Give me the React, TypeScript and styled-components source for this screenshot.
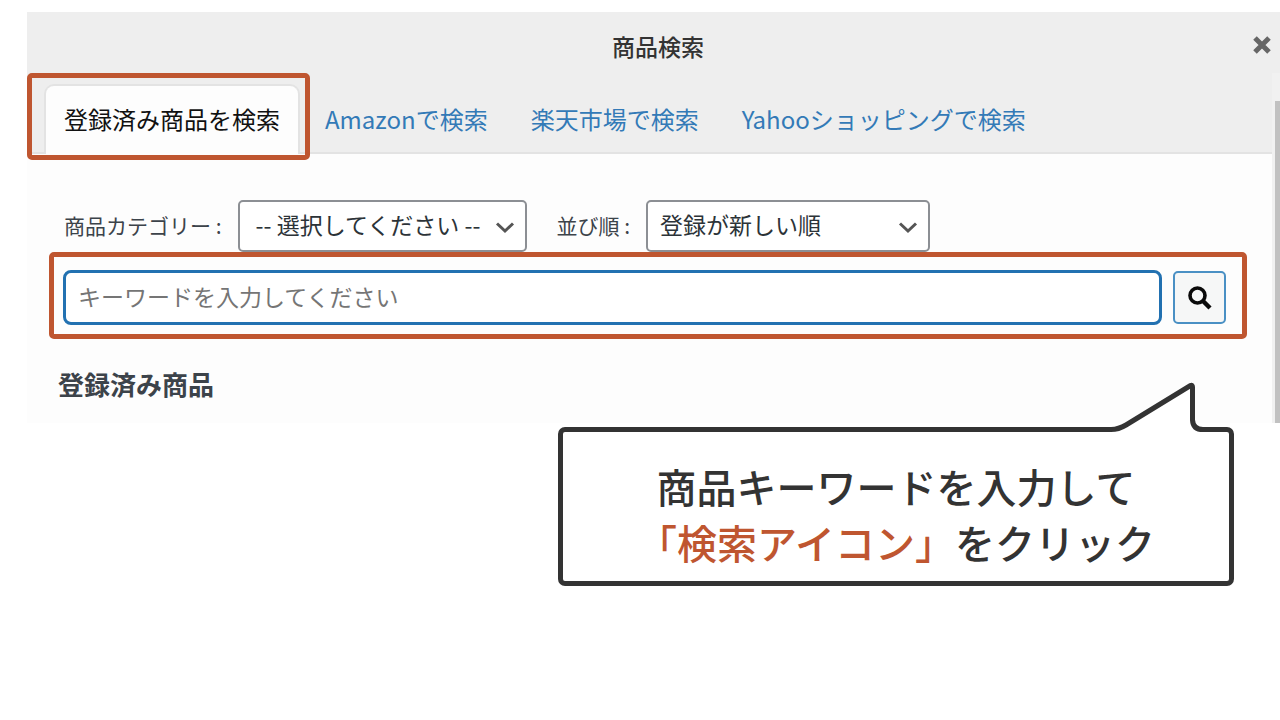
import React from "react";
import styled, { createGlobalStyle } from "styled-components";

const ACCENT = "#bf5630";
const INK = "#333333";
const BLUE = "#2271b1";

const GlobalStyle = createGlobalStyle`
  *, *::before, *::after { box-sizing: border-box; }
  body {
    margin: 0;
    background: #ffffff;
    font-family: "Noto Sans CJK JP", "Noto Sans", sans-serif;
    color: #3c434a;
  }
  button, input, select { font: inherit; color: inherit; margin: 0; }
`;

const Page = styled.main`
  display: flex;
  flex-direction: column;
  padding-top: 12px;
  overflow-x: hidden;
`;

const Dialog = styled.section`
  margin-left: 27px;
  background: #fdfdfd;
`;

const DialogHeader = styled.header`
  display: flex;
  align-items: center;
  height: 61px;
  padding: 6px 9px 0 36px;
  background: #eeeeee;
`;

const DialogTitle = styled.h1`
  flex: 1;
  margin: 0;
  font-size: 23px;
  line-height: 32px;
  font-weight: 500;
  text-align: center;
  color: #333333;
`;

const CloseButton = styled.button`
  display: flex;
  padding: 0 0 2px;
  border: 0;
  background: none;
`;

const DialogBody = styled.div`
  display: flex;
`;

const Content = styled.div`
  flex: 1;
  min-width: 0;
`;

const ScrollTrack = styled.div`
  width: 8px;
  padding: 28px 0 0 3px;
  background: #f1f1f1;
`;

const ScrollThumb = styled.div`
  height: 100%;
  background: #c1c1c1;
`;

const Tabs = styled.nav`
  display: flex;
  align-items: flex-end;
  gap: 5px;
  height: 81px;
  padding-left: 17px;
  border-bottom: 2px solid #e3e3e3;
  background: #eeeeee;
`;

const Tab = styled.a<{ $active?: boolean }>`
  position: relative;
  height: 70px;
  margin-bottom: -2px;
  padding: 0 ${(p) => (p.$active ? 18 : 16)}px 0 18px;
  border: 2px solid ${(p) => (p.$active ? "#e3e3e3" : "transparent")};
  border-bottom: 0;
  border-radius: 10px 10px 0 0;
  background: ${(p) => (p.$active ? "#fdfdfd" : "transparent")};
  color: ${(p) => (p.$active ? "#111111" : "#337ab7")};
  font-size: 24px;
  line-height: 66px;
  text-decoration: none;
  white-space: nowrap;
`;

const TabHighlight = styled.span`
  position: absolute;
  inset: -13px -12px -6px -19px;
  border: 5px solid ${ACCENT};
  border-radius: 5px;
  pointer-events: none;
`;

const Filters = styled.div`
  display: flex;
  align-items: center;
  gap: 30px;
  padding: 46px 0 0 37px;
`;

const Field = styled.div`
  display: flex;
  align-items: center;
  gap: 16px;
`;

const FieldLabel = styled.label`
  padding-bottom: 2px;
  font-size: 21px;
  white-space: nowrap;
`;

const SelectBox = styled.div<{ $width: number }>`
  position: relative;
  width: ${(p) => p.$width}px;
`;

const Select = styled.select<{ $indent: number }>`
  appearance: none;
  display: block;
  width: 100%;
  height: 52px;
  padding: 0 36px 4px ${(p) => p.$indent}px;
  border: 2px solid #8c8f94;
  border-radius: 5px;
  background: #ffffff;
  color: #2c3338;
  font-size: 23px;
`;

const Chevron = styled.svg`
  position: absolute;
  right: 12px;
  top: 21px;
  pointer-events: none;
`;

const SearchForm = styled.form`
  display: flex;
  align-items: center;
  gap: 11px;
  margin: 0 25px 0 22px;
  padding: 13px 16px 9px 9px;
  border: 5px solid ${ACCENT};
  border-radius: 5px;
`;

const KeywordInput = styled.input`
  flex: 1;
  min-width: 0;
  height: 55px;
  padding: 0 12px 4px;
  border: 3px solid ${BLUE};
  border-radius: 8px;
  outline: 0;
  background: #ffffff;
  font-size: 23px;
  &::placeholder { color: #757575; opacity: 1; }
`;

const SearchButton = styled.button`
  display: flex;
  align-items: center;
  justify-content: center;
  width: 53px;
  height: 53px;
  padding: 0;
  border: 2px solid #4a90c4;
  border-radius: 5px;
  background: #f6f7f7;
`;

const SectionTitle = styled.h2`
  margin: 0;
  padding: 26px 0 20px 31px;
  font-size: 26px;
  line-height: 38px;
  font-weight: 700;
`;

const Callout = styled.aside`
  position: relative;
  align-self: flex-end;
  margin: 4px 46px 0 0;
  padding: 26px 74px 11px;
  border: 5px solid ${INK};
  border-radius: 7px;
  background: #ffffff;
`;

const CalloutTail = styled.svg`
  position: absolute;
  right: 16px;
  top: -51px;
`;

const CalloutText = styled.p`
  margin: 0;
  font-size: 40px;
  line-height: 56px;
  font-weight: 500;
  text-align: center;
  white-space: nowrap;
  color: ${INK};
`;

const Accent = styled.strong`
  font-weight: inherit;
  color: ${ACCENT};
`;

type SelectFieldProps = {
  id: string;
  label: string;
  option: string;
  width: number;
  indent: number;
};

function SelectField({ id, label, option, width, indent }: SelectFieldProps) {
  return (
    <Field>
      <FieldLabel htmlFor={id}>{label}</FieldLabel>
      <SelectBox $width={width}>
        <Select id={id} $indent={indent}>
          <option>{option}</option>
        </Select>
        <Chevron width="20" height="14" viewBox="0 0 20 14" aria-hidden="true">
          <path d="M2 2.5l8 7.5 8-7.5" fill="none" stroke="#555555" strokeWidth="3" />
        </Chevron>
      </SelectBox>
    </Field>
  );
}

export default function App() {
  return (
    <Page>
      <GlobalStyle />
      <Dialog>
        <DialogHeader>
          <DialogTitle>商品検索</DialogTitle>
          <CloseButton type="button" aria-label="閉じる">
            <svg width="18" height="18" viewBox="0 0 18 18" aria-hidden="true">
              <path d="M2 2l14 14M16 2L2 16" stroke="#666666" strokeWidth="5" />
            </svg>
          </CloseButton>
        </DialogHeader>
        <DialogBody>
          <Content>
            <Tabs>
              <Tab href="#registered" $active>
                登録済み商品を検索
                <TabHighlight />
              </Tab>
              <Tab href="#amazon">Amazonで検索</Tab>
              <Tab href="#rakuten">楽天市場で検索</Tab>
              <Tab href="#yahoo">Yahooショッピングで検索</Tab>
            </Tabs>
            <Filters>
              <SelectField
                id="category"
                label="商品カテゴリー :"
                option="-- 選択してください --"
                width={289}
                indent={16}
              />
              <SelectField id="order" label="並び順 :" option="登録が新しい順" width={284} indent={12} />
            </Filters>
            <SearchForm>
              <KeywordInput type="text" aria-label="キーワード" placeholder="キーワードを入力してください" />
              <SearchButton type="button" aria-label="検索">
                <svg width="26" height="26" viewBox="0 0 26 26" aria-hidden="true">
                  <circle cx="10.5" cy="10.5" r="7.5" fill="none" stroke="#0a0a0a" strokeWidth="3.6" />
                  <path d="M16 16l7 7" stroke="#0a0a0a" strokeWidth="4.4" />
                </svg>
              </SearchButton>
            </SearchForm>
            <SectionTitle>登録済み商品</SectionTitle>
          </Content>
          <ScrollTrack>
            <ScrollThumb />
          </ScrollTrack>
        </DialogBody>
      </Dialog>
      <Callout>
        <CalloutTail width="102" height="52" viewBox="0 0 102 52" aria-hidden="true">
          <path
            d="M0 48.5C8 48.5 10 47 15 44L79.5 4.5Q81.5 3.5 81.5 6V39Q82 48.5 92 48.5H102V52H0Z"
            fill="#ffffff"
          />
          <path
            d="M0 48.5C7 48.5 10 47 15 44L79.5 4.5Q81.5 3.5 81.5 6V39Q82 48.5 92 48.5H102"
            fill="none"
            stroke={INK}
            strokeWidth="5"
          />
        </CalloutTail>
        <CalloutText>
          商品キーワードを入力して
          <br />
          <Accent>「検索アイコン」</Accent>をクリック
        </CalloutText>
      </Callout>
    </Page>
  );
}
